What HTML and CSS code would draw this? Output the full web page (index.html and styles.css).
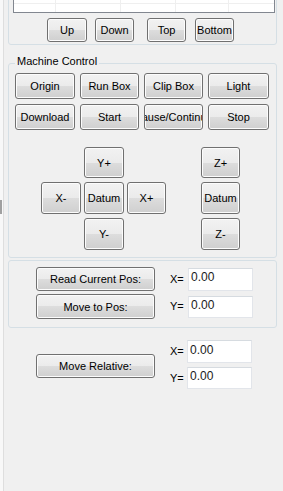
FILE: index.html
```html
<!DOCTYPE html>
<html>
<head>
<meta charset="utf-8">
<link rel="stylesheet" href="styles.css">
</head>
<body>
<div class="app">
  <div class="edge"></div>
  <main class="panel">
    <section class="group list-group">
      <div class="list">
        <div class="cell top"></div><div class="cell top"></div><div class="cell top"></div><div class="cell top"></div><div class="cell top last"></div>
        <div class="cell"></div><div class="cell"></div><div class="cell"></div><div class="cell"></div><div class="cell last"></div>
      </div>
      <div class="order-row">
        <button class="btn order up"><span>Up</span></button>
        <button class="btn order down"><span>Down</span></button>
        <button class="btn order totop"><span>Top</span></button>
        <button class="btn order bottom"><span>Bottom</span></button>
      </div>
    </section>

    <fieldset class="group machine">
      <legend>Machine Control</legend>
      <div class="cmd-grid">
        <button class="btn"><span>Origin</span></button>
        <button class="btn"><span>Run Box</span></button>
        <button class="btn"><span>Clip Box</span></button>
        <button class="btn"><span>Light</span></button>
        <button class="btn"><span>Download</span></button>
        <button class="btn"><span>Start</span></button>
        <button class="btn"><span>Pause/Continue</span></button>
        <button class="btn"><span>Stop</span></button>
      </div>
      <div class="jog">
        <button class="btn yp"><span>Y+</span></button>
        <button class="btn xm"><span>X-</span></button>
        <button class="btn dxy"><span>Datum</span></button>
        <button class="btn xp"><span>X+</span></button>
        <button class="btn ym"><span>Y-</span></button>
        <button class="btn zp"><span>Z+</span></button>
        <button class="btn dz"><span>Datum</span></button>
        <button class="btn zm"><span>Z-</span></button>
      </div>
    </fieldset>

    <section class="group pos">
      <div class="pos-grid">
        <button class="btn wide r1"><span>Read Current Pos:</span></button>
        <label class="axis">X=</label>
        <input class="field f1" type="text" value="0.00">
        <button class="btn wide r2"><span>Move to Pos:</span></button>
        <label class="axis">Y=</label>
        <input class="field f2" type="text" value="0.00">
      </div>
    </section>

    <section class="relative">
      <button class="btn wide rel"><span>Move Relative:</span></button>
      <div class="rel-grid">
        <label class="axis">X=</label>
        <input class="field f1" type="text" value="0.00">
        <label class="axis">Y=</label>
        <input class="field f2" type="text" value="0.00">
      </div>
    </section>
  </main>
</div>
</body>
</html>
```

FILE: styles.css
```css
* { box-sizing: border-box; }
html, body {
  margin: 0;
  padding: 0;
  height: 100%;
  background: #f0f0f0;
  overflow: hidden;
}
body {
  font-family: "Liberation Sans", Arial, sans-serif;
  font-size: 11px;
  color: #000;
}
.app {
  display: flex;
  height: 491px;
}
.edge {
  width: 4px;
  flex: 0 0 4px;
  background:
    linear-gradient(#a0a0a0, #a0a0a0) no-repeat 0 200px / 2px 14px,
    linear-gradient(to right, #f8f8f8 0 3px, #dedede 3px 4px);
}
.panel {
  flex: 1;
  padding: 0 6px 0 4px;
  display: flex;
  flex-direction: column;
}
.group {
  border: 1px solid #d5dfe5;
  border-radius: 3px;
  margin: 0;
  min-width: 0;
}

/* list group */
.list-group {
  margin-top: -30px;
  padding: 3px 1px 2px 4px;
}
.list {
  height: 39px;
  border: 1px solid #828790;
  background: #fff;
  display: grid;
  grid-template-columns: 42px 65px 55px 53px 1fr;
  grid-template-rows: 29px 1fr;
}
.cell { border-right: 1px solid #efefef; }
.cell.top { border-bottom: 1px solid #efefef; }
.cell.last { border-right: none; }
.order-row {
  display: flex;
  margin-top: 5px;
  padding-left: 34px;
}
.order { height: 24px; width: 39px; }
.order.up { width: 40px; }
.order.down { margin-left: 8px; }
.order.totop { margin-left: 13px; }
.order.bottom { margin-left: 9px; }

/* buttons */
.btn {
  font-family: "Liberation Sans", Arial, sans-serif;
  font-size: 11px;
  color: #000;
  margin: 0;
  padding: 0;
  border: 1px solid #707070;
  border-radius: 3px;
  background: linear-gradient(#f2f2f2 0%, #ebebeb 50%, #dddddd 50%, #cfcfcf 100%);
  box-shadow: inset 0 0 0 1px #fcfcfc;
  display: flex;
  align-items: center;
  justify-content: center;
  overflow: hidden;
}
.btn span { white-space: nowrap; flex-shrink: 0; }

/* machine control */
.machine {
  margin-top: 10px;
  padding: 1px 6px 7px 6px;
}
.machine legend {
  padding: 0 2px 4px 2px;
  line-height: 13px;
  font-size: 11px;
}
.cmd-grid {
  display: grid;
  grid-template-columns: 60px 59px 59px 61px;
  grid-template-rows: 26px 26px;
  gap: 5px;
}
.jog {
  margin-top: 17px;
  margin-left: 26px;
  display: grid;
  grid-template-columns: 40px 40px 39px 29px 39px;
  grid-template-rows: 31px 32px 32px;
  column-gap: 3px;
  row-gap: 4px;
  grid-template-areas:
    ".  yp  .  . zp"
    "xm dxy xp . dz"
    ".  ym  .  . zm";
}
.yp { grid-area: yp; }
.xm { grid-area: xm; }
.dxy { grid-area: dxy; }
.xp { grid-area: xp; }
.ym { grid-area: ym; }
.zp { grid-area: zp; }
.dz { grid-area: dz; }
.zm { grid-area: zm; }

/* position group */
.pos {
  margin-top: 2px;
  padding: 6px 0 8px 27px;
}
.pos-grid {
  display: grid;
  grid-template-columns: 119px 33px 65px;
  grid-template-rows: 24px 25px;
  row-gap: 3px;
  align-items: center;
}
.wide { width: 119px; height: 100%; }
.axis {
  padding-left: 15px;
  font-size: 11px;
  line-height: 13px;
}
.field {
  font-family: "Liberation Sans", Arial, sans-serif;
  font-size: 12px;
  color: #1a1a1a;
  width: 65px;
  border: 1px solid #e2e5ea;
  border-top-color: #d6dbe0;
  background: #fff;
  margin: 0;
  padding: 0 1px 4px 2px;
  outline: none;
}
.field.f1 { height: 23px; }
.field.f2 { height: 22px; }

/* relative */
.relative {
  display: flex;
  align-items: flex-start;
  padding: 12px 0 0 28px;
}
.rel {
  height: 24px;
  margin-top: 14px;
  flex: 0 0 119px;
}
.rel-grid {
  display: grid;
  grid-template-columns: 32px 65px;
  grid-template-rows: 23px 22px;
  row-gap: 4px;
  align-items: center;
}
```
